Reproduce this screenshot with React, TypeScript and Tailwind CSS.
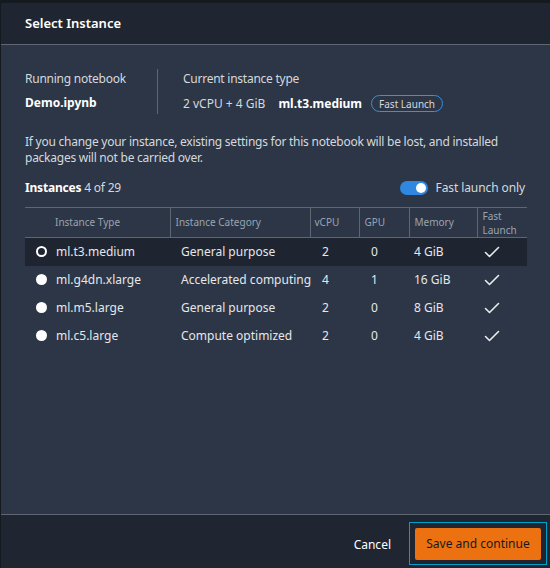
import React from 'react';

const FONT = { fontFamily: '"Noto Sans", "Open Sans", sans-serif' };

const ROWS = [
  { type: 'ml.t3.medium', category: 'General purpose', vcpu: '2', gpu: '0', memory: '4 GiB', selected: true },
  { type: 'ml.g4dn.xlarge', category: 'Accelerated computing', vcpu: '4', gpu: '1', memory: '16 GiB', selected: false },
  { type: 'ml.m5.large', category: 'General purpose', vcpu: '2', gpu: '0', memory: '8 GiB', selected: false },
  { type: 'ml.c5.large', category: 'Compute optimized', vcpu: '2', gpu: '0', memory: '4 GiB', selected: false },
];

const Check = () => (
  <svg width="16" height="12" viewBox="0 0 16 12" fill="none">
    <path d="M1.5 6.5 L5.5 10.5 L14.5 1.5" stroke="#e9ebed" strokeWidth="1.6" strokeLinecap="round" strokeLinejoin="round" />
  </svg>
);

export default function App() {
  return (
    <div className="w-[550px] h-[568px] bg-[#151a21] pt-[3px] pl-px" style={FONT}>
      <div className="flex flex-col h-full bg-[#2c3646]">
        <div className="h-[42px] shrink-0 bg-[#1f2631] border-b border-[#5f6672] flex items-center px-6">
          <h2 className="text-[13px] font-semibold text-white">Select Instance</h2>
        </div>

        <div className="flex-1 px-6 pt-[24px]">
          <div className="flex">
            <div className="w-[133px] border-r border-[#5f6672] flex flex-col gap-[8px] py-[2px]">
              <span className="text-[12px] tracking-[-0.25px] text-[#d5d9de] leading-[16px]">Running notebook</span>
              <span className="text-[12px] font-bold text-white leading-[16px]">Demo.ipynb</span>
            </div>
            <div className="pl-[25px] flex flex-col gap-[8px] py-[2px]">
              <span className="text-[12px] tracking-[-0.25px] text-[#d5d9de] leading-[16px]">Current instance type</span>
              <div className="flex items-center leading-[16px]">
                <span className="text-[12px] text-[#d5d9de]">2 vCPU + 4 GiB</span>
                <span className="text-[12px] font-bold text-white ml-[13px]">ml.t3.medium</span>
                <span className="ml-[9px] rounded-full border border-[#3b8ee0] px-[7px] h-[17px] flex items-center text-[10px] text-[#d5d9de]">Fast Launch</span>
              </div>
            </div>
          </div>

          <p className="mt-[20px] text-[12px] tracking-[-0.25px] leading-[16px] text-[#d5d9de] w-[502px]">
            If you change your instance, existing settings for this notebook will be lost, and installed packages will not be carried over.
          </p>

          <div className="mt-[13px] flex items-center justify-between">
            <span className="text-[12px] tracking-[-0.2px] text-[#d5d9de]">
              <span className="font-bold text-white">Instances</span> 4 of 29
            </span>
            <div className="flex items-center gap-[8px] pr-[1px]">
              <div className="w-[28px] h-[14px] rounded-full bg-[#2f87e0] flex items-center justify-end pr-[2px]">
                <div className="w-[10px] h-[10px] rounded-full bg-white" />
              </div>
              <span className="text-[12px] tracking-[-0.1px] text-[#d5d9de]">Fast launch only</span>
            </div>
          </div>

          <table className="mt-[10px] w-[502px] border-collapse table-fixed">
            <colgroup>
              <col className="w-[145px]" />
              <col className="w-[140px]" />
              <col className="w-[49px]" />
              <col className="w-[50px]" />
              <col className="w-[68px]" />
              <col className="w-[50px]" />
            </colgroup>
            <thead>
              <tr className="h-[30px] border-t border-b border-[#5f6672] text-[10px] text-[#9aa4b1] text-left">
                <th className="font-normal pl-[30px] border-r border-[#5f6672]">Instance Type</th>
                <th className="font-normal pl-[5px] border-r border-[#5f6672]">Instance Category</th>
                <th className="font-normal pl-[4px] border-r border-[#5f6672]">vCPU</th>
                <th className="font-normal pl-[5px] border-r border-[#5f6672]">GPU</th>
                <th className="font-normal pl-[5px] border-r border-[#5f6672]">Memory</th>
                <th className="font-normal pl-[5px] leading-[14px]">Fast<br />Launch</th>
              </tr>
            </thead>
            <tbody>
              {ROWS.map((r) => (
                <tr key={r.type} className={`h-[28px] text-[12px] text-[#e5e7eb] ${r.selected ? 'bg-[#1e2530]' : ''}`}>
                  <td className="pl-[11px]">
                    <div className="flex items-center gap-[9px]">
                      {r.selected ? (
                        <span className="w-[11px] h-[11px] rounded-full border-[2.5px] border-white box-border" />
                      ) : (
                        <span className="w-[11px] h-[11px] rounded-full bg-white" />
                      )}
                      <span>{r.type}</span>
                    </div>
                  </td>
                  <td className="pl-[11px] whitespace-nowrap">{r.category}</td>
                  <td className="pl-[12px]">{r.vcpu}</td>
                  <td className="pl-[12px]">{r.gpu}</td>
                  <td className="pl-[5px]">{r.memory}</td>
                  <td className="pl-[7px]">
                    <div className="flex items-center"><Check /></div>
                  </td>
                </tr>
              ))}
            </tbody>
          </table>
        </div>

        <div className="h-[54px] shrink-0 bg-[#1f2631] border-t border-[#5f6672] flex items-start justify-end pt-[7px] pr-[3px]">
          <button className="text-[12px] text-white mr-[18px] mt-[14px]">Cancel</button>
          <div className="border border-[#00a1c9] p-[5px] pb-[4px]">
            <button className="h-[32px] w-[126px] rounded-[2px] bg-[#ec7211] text-[12px] text-[#16191f]">Save and continue</button>
          </div>
        </div>
      </div>
    </div>
  );
}
